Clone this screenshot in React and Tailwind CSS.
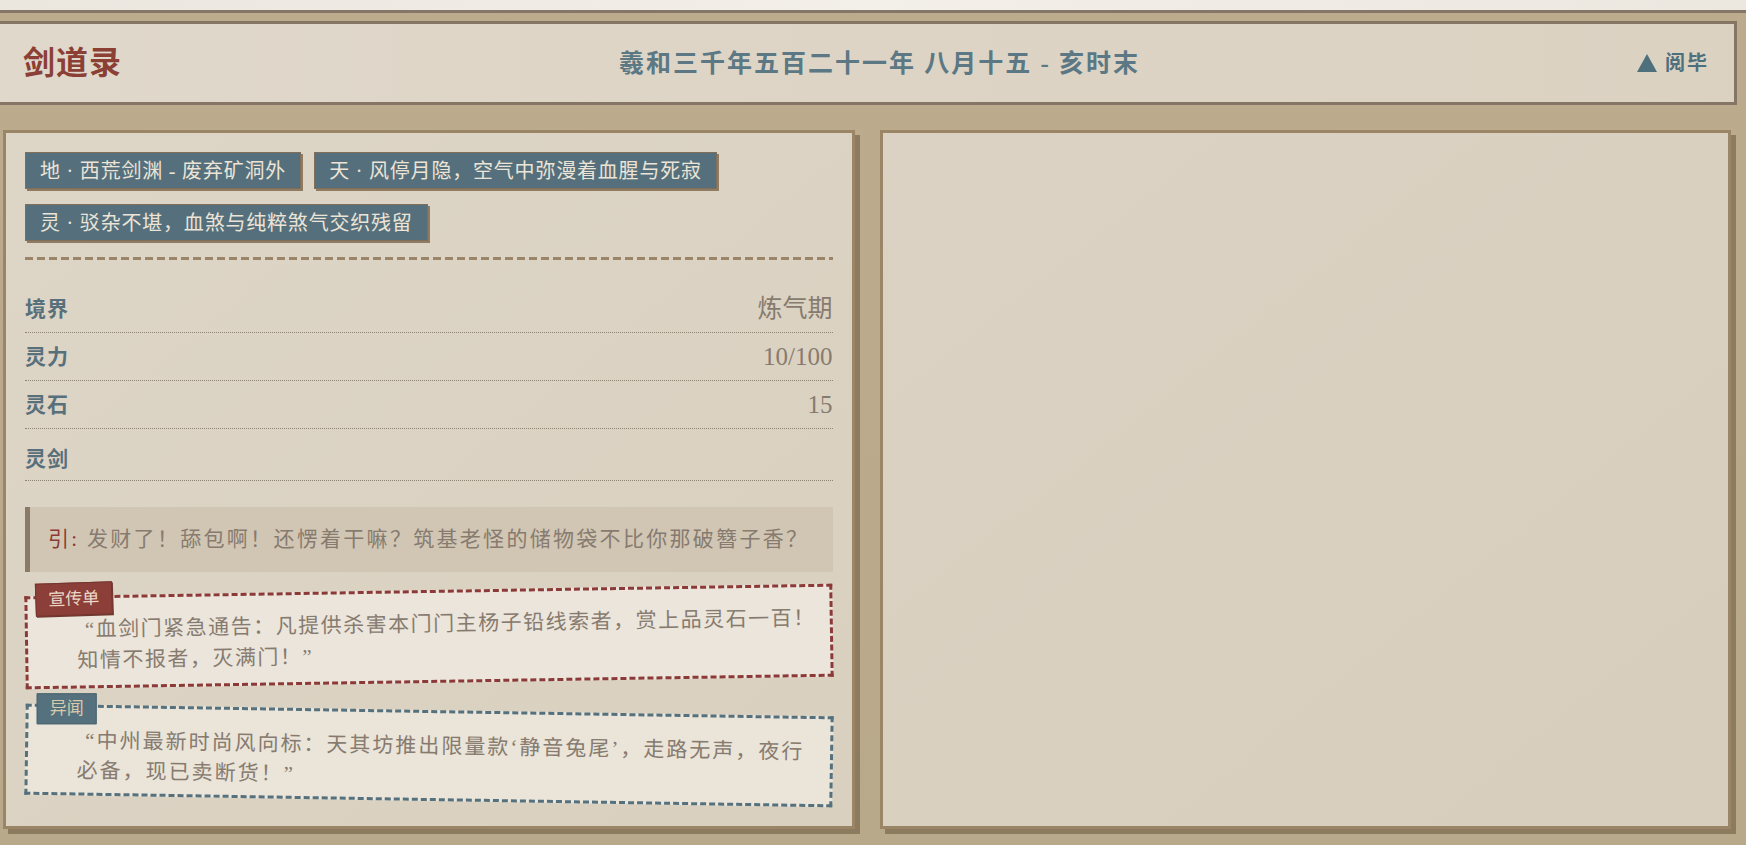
import React from "react";

const FONT = { fontFamily: '"Liberation Serif", "Noto Sans CJK SC", serif' };

function Tag({ children }) {
  return (
    <div className="h-[37px] flex items-center px-[14px] bg-[#55707c] border border-[#7f6f5a] shadow-[2px_2px_0_#8f7b62] text-[#ece4d6] text-[20px] tracking-[0.8px] whitespace-nowrap">
      {children}
    </div>
  );
}

function StatRow({ label, value, last }) {
  return (
    <div
      className={
        "flex items-center justify-between border-b border-dotted border-[#8f8373] " +
        (last ? "h-[52px] pt-[8px]" : "h-[48px]")
      }
    >
      <span className="text-[21px] font-bold tracking-[1px] text-[#58707c] leading-[26px]">{label}</span>
      <span className="text-[25px] text-[#877b6f] leading-[26px]">{value}</span>
    </div>
  );
}

export default function App() {
  return (
    <div className="h-screen w-full flex flex-col overflow-hidden bg-[#bcab8e]" style={FONT}>
      {/* paper strip above the frame */}
      <div className="h-[10px] shrink-0 bg-gradient-to-r from-[#ebe6de] via-[#f3efe9] to-[#ece7df]" />

      <div className="flex-1 flex flex-col border-t-[3px] border-[#857767] pt-[8px] pb-[16px] bg-gradient-to-b from-[#bcab8c] to-[#b9a98b]">
        {/* header bar */}
        <header className="h-[84px] shrink-0 mr-[9px] flex items-center justify-between border-[3px] border-l-0 border-[#857565] bg-gradient-to-r from-[#e0d8cb] via-[#ddd4c5] to-[#dbd2c2] pl-[23px] pr-[25px]">
          <div className="text-[32px] font-bold tracking-[1px] text-[#8b3f35] leading-none">剑道录</div>
          <div className="text-[25px] font-bold tracking-[2px] text-[#5b7884] leading-none">
            羲和三千年五百二十一年 八月十五 - 亥时末
          </div>
          <div className="flex items-center gap-[8px] text-[20px] font-bold tracking-[2px] text-[#4e6f7c] leading-none">
            <svg width="20" height="18" viewBox="0 0 20 18" className="shrink-0">
              <path d="M10 0 L20 18 L0 18 Z" fill="#4e6f7c" />
            </svg>
            <span>阅毕</span>
          </div>
        </header>

        {/* two panels */}
        <div className="flex-1 grid grid-cols-2 gap-[25px] pl-[3px] pr-[15px] mt-[25px]">
          {/* left panel */}
          <section className="border-[3px] border-[#9a8566] shadow-[5px_5px_0_#8d7b60] bg-gradient-to-br from-[#ddd5c6] to-[#d9d0bf] p-[19px] flex flex-col">
            <div className="flex flex-wrap gap-x-[13px] gap-y-[15px]">
              <Tag>地 · 西荒剑渊 - 废弃矿洞外</Tag>
              <Tag>天 · 风停月隐，空气中弥漫着血腥与死寂</Tag>
              <Tag>灵 · 驳杂不堪，血煞与纯粹煞气交织残留</Tag>
            </div>

            <div className="mt-[16px] h-[3px] bg-[repeating-linear-gradient(90deg,#9b8568_0_8px,transparent_8px_12px)]" />

            <div className="mt-[25px] flex flex-col">
              <StatRow label="境界" value="炼气期" />
              <StatRow label="灵力" value="10/100" />
              <StatRow label="灵石" value="15" />
              <StatRow label="灵剑" value="" last />
            </div>

            {/* quoted line */}
            <div className="mt-[26px] border-l-[5px] border-[#8a7a68] bg-[#d1c6b4] pl-[18px] py-[16px] text-[21px] tracking-[2.3px] leading-[33px] text-[#877b6f] whitespace-nowrap">
              <span className="text-[#8b3a37]">引:</span> 发财了！舔包啊！还愣着干嘛？筑基老怪的储物袋不比你那破簪子香？
            </div>

            {/* flyer */}
            <div className="relative mt-[18px] rotate-[-0.9deg] border-[3px] border-dashed border-[#8b3a37] bg-[#ebe5db] pl-[49px] pr-[10px] pt-[16px] pb-[9px] text-[21px] tracking-[1.5px] leading-[31px] text-[#877b6f]">
              <div className="absolute left-[8px] top-[-16px] rotate-[-1deg] h-[33px] px-[12px] flex items-center bg-[#8c3f38] border border-[#74352f] shadow-[1px_1px_0_#6a3a33] text-[17px] tracking-[0px] text-[#ecd9c9] whitespace-nowrap">
                宣传单
              </div>
              <div className="w-fit whitespace-nowrap pl-[8px]">“血剑门紧急通告：凡提供杀害本门门主杨子铅线索者，赏上品灵石一百！</div>
              <div className="w-fit whitespace-nowrap">知情不报者，灭满门！”</div>
            </div>

            {/* rumour */}
            <div className="relative mt-[27px] rotate-[0.9deg] border-[3px] border-dashed border-[#55717d] bg-[#eae4d9] pl-[49px] pr-[10px] pt-[18px] pb-[7px] text-[21px] tracking-[2px] leading-[30px] text-[#877b6f]">
              <div className="absolute left-[8px] top-[-14px] rotate-[-0.9deg] h-[31px] px-[12px] flex items-center bg-[#55717d] border border-[#4a6470] text-[17px] tracking-[0px] text-[#d8c9a9] whitespace-nowrap">
                异闻
              </div>
              <div className="w-fit whitespace-nowrap pl-[8px]">“中州最新时尚风向标：天其坊推出限量款‘静音兔尾’，走路无声，夜行</div>
              <div className="w-fit whitespace-nowrap">必备，现已卖断货！”</div>
            </div>
          </section>

          {/* right panel */}
          <section className="border-[3px] border-[#9a8566] shadow-[5px_5px_0_#8d7b60] bg-gradient-to-br from-[#dbd2c3] via-[#d9d0c0] to-[#d7cebd]" />
        </div>
      </div>
    </div>
  );
}
